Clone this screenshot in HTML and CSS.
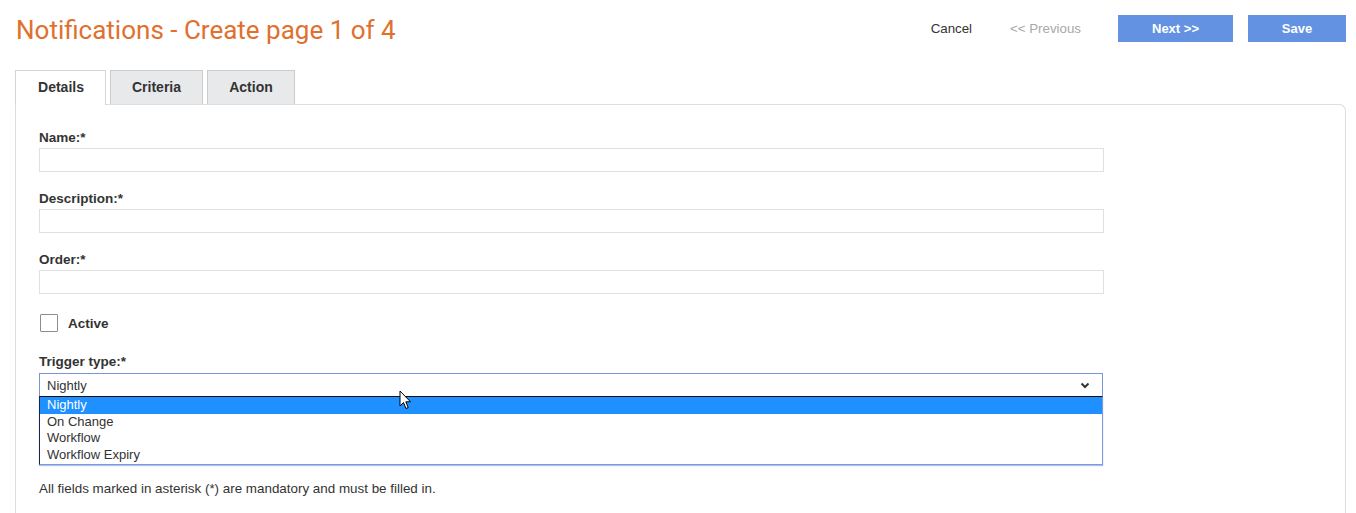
FILE: index.html
```html
<!DOCTYPE html>
<html>
<head>
<meta charset="utf-8">
<link rel="stylesheet" href="styles.css">
</head>
<body>
<div class="page">
  <div class="header">
    <h1 class="title">Notifications - Create page 1 of 4</h1>
    <div class="actions">
      <a class="link cancel">Cancel</a>
      <a class="link prev">&lt;&lt; Previous</a>
      <button class="btn next">Next &gt;&gt;</button>
      <button class="btn save">Save</button>
    </div>
  </div>
  <div class="tabs">
    <div class="tab active">Details</div>
    <div class="tab criteria">Criteria</div>
    <div class="tab action">Action</div>
  </div>
  <div class="panel">
    <div class="field">
      <label class="lbl">Name:*</label>
      <div class="input"></div>
    </div>
    <div class="field">
      <label class="lbl">Description:*</label>
      <div class="input"></div>
    </div>
    <div class="field">
      <label class="lbl">Order:*</label>
      <div class="input"></div>
    </div>
    <div class="check-row">
      <span class="checkbox"></span>
      <span class="check-lbl">Active</span>
    </div>
    <div class="field">
      <label class="lbl">Trigger type:*</label>
      <div class="select-wrap">
        <div class="select">
          <span>Nightly</span>
          <svg class="chev" width="10" height="7" viewBox="0 0 10 7"><polyline points="1.5,1.5 5,5 8.5,1.5" fill="none" stroke="#333" stroke-width="2"/></svg>
        </div>
        <div class="dropdown">
          <div class="opt sel">Nightly</div>
          <div class="opt">On Change</div>
          <div class="opt">Workflow</div>
          <div class="opt">Workflow Expiry</div>
        </div>
        <svg class="cursor" width="14" height="22" viewBox="0 0 14 22"><path d="M1,1 L1,16 L4.5,12.5 L7,18.5 L9.2,17.5 L6.8,11.8 L11.5,11.8 Z" fill="#fff" stroke="#000" stroke-width="1" stroke-linejoin="round"/></svg>
      </div>
    </div>
    <p class="note">All fields marked in asterisk (*) are mandatory and must be filled in.</p>
  </div>
</div>
</body>
</html>
```
FILE: styles.css
```css
html, body {
  margin: 0;
  padding: 0;
  background: #fff;
}
body {
  font-family: "Liberation Sans", Arial, sans-serif;
  color: #333;
  font-size: 13px;
}
.page {
  padding: 0 10px 0 15px;
}
.header {
  display: flex;
  align-items: flex-start;
  justify-content: space-between;
  padding-top: 15px;
  height: 55px;
}
.title {
  margin: 0;
  font-family: Roboto, "Liberation Sans", sans-serif;
  font-weight: 400;
  font-size: 26px;
  line-height: 30px;
  color: #e0702e;
  padding-left: 1px;
}
.actions {
  display: flex;
  align-items: center;
  height: 27px;
}
.link {
  font-size: 13.3px;
  cursor: pointer;
}
.cancel {
  color: #333;
  margin-right: 38px;
}
.prev {
  color: #a8a8a8;
  margin-right: 37px;
}
.btn {
  border: none;
  background: #6492e3;
  color: #fff;
  font-family: "Liberation Sans", Arial, sans-serif;
  font-weight: bold;
  font-size: 13px;
  height: 27px;
  padding: 0;
}
.next {
  width: 115px;
  margin-right: 15px;
}
.save {
  width: 98px;
}
.tabs {
  display: flex;
  gap: 4px;
  height: 34px;
  position: relative;
  z-index: 1;
}
.tab {
  box-sizing: border-box;
  height: 34px;
  padding: 0;
  text-align: center;
  border: 1px solid #ccc;
  border-bottom: none;
  background: #e8e9eb;
  font-weight: bold;
  font-size: 14px;
  line-height: 33px;
  color: #333;
}
.tab.active {
  background: #fff;
  height: 35px;
  border-color: #d4d4d4;
  width: 91px;
  padding-left: 1px;
}
.tab.criteria { width: 93px; }
.tab.action { width: 88px; }
.panel {
  box-sizing: border-box;
  border: 1px solid #dedede;
  border-bottom: none;
  border-top-right-radius: 7px;
  padding: 25px 0 0 23px;
  height: 409px;
}
.field {
  display: flex;
  flex-direction: column;
  margin-bottom: 19px;
}
.lbl {
  font-weight: bold;
  font-size: 13.5px;
  line-height: 16px;
  margin-bottom: 2px;
  color: #333;
}
.input {
  width: 1065px;
  height: 24px;
  box-sizing: border-box;
  border: 1px solid #e0e0e0;
}
.check-row {
  display: flex;
  align-items: center;
  margin-top: 20px;
  margin-bottom: 22px;
  padding-left: 1px;
}
.checkbox {
  width: 18px;
  height: 18px;
  box-sizing: border-box;
  border: 1px solid #8d8d8d;
  border-radius: 1px;
  margin-right: 10px;
}
.check-lbl {
  font-weight: bold;
  font-size: 13.5px;
}
.select-wrap {
  position: relative;
  width: 1064px;
  margin-top: 1px;
}
.select {
  box-sizing: border-box;
  height: 24px;
  border: 1px solid #7c95d4;
  display: flex;
  align-items: center;
  justify-content: space-between;
  padding: 0 12px 0 7px;
  font-size: 13px;
  color: #333;
}
.chev {
  display: block;
}
.dropdown {
  position: absolute;
  left: 0;
  top: 23px;
  width: 1064px;
  box-sizing: border-box;
  border: 1px solid #7d98dc;
  border-top: 1px solid #111;
  border-left: 1px solid #1c2550;
  background: #fff;
  box-shadow: 0 1px 1px rgba(90, 130, 220, 0.5);
  padding-bottom: 1px;
}
.opt {
  font-size: 13px;
  line-height: 16.5px;
  height: 16.5px;
  padding-left: 7px;
  color: #333;
}
.opt.sel {
  background: #1e90ff;
  color: #fff;
}
.cursor {
  position: absolute;
  left: 360px;
  top: 17px;
}
.note {
  margin: 84px 0 0 0;
  font-size: 13.4px;
  line-height: 15px;
  color: #333;
}
```
